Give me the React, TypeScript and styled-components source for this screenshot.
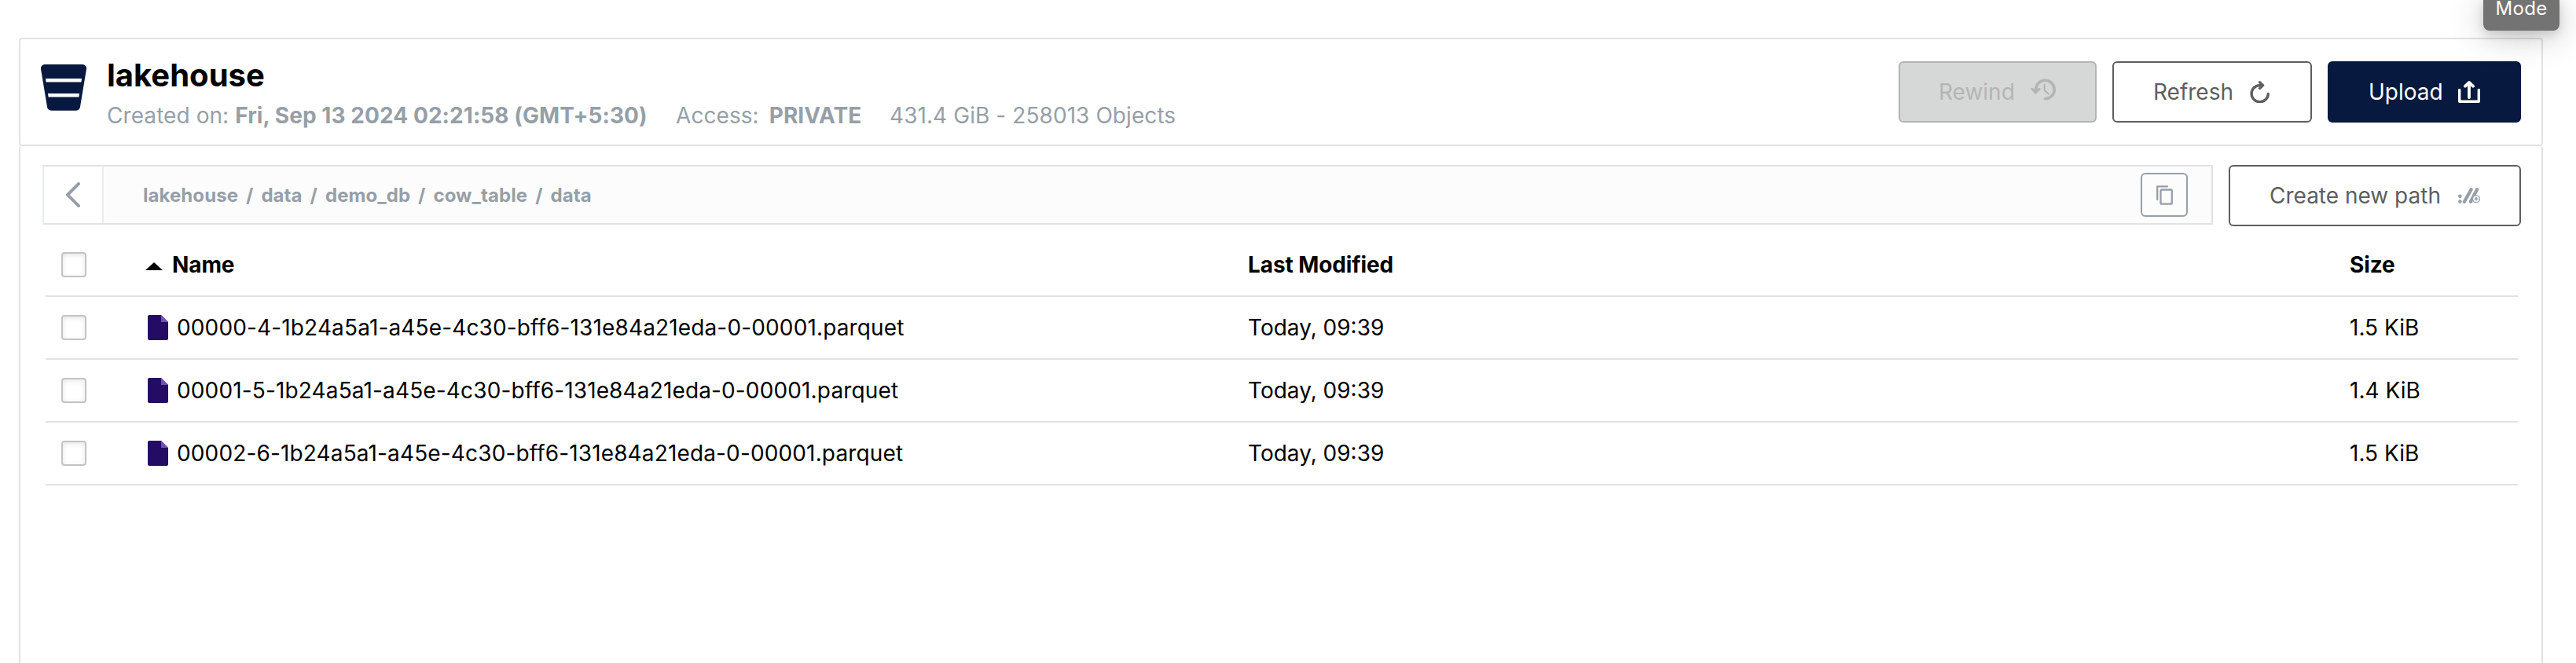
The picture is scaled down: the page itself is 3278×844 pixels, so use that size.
import styled, { createGlobalStyle, css } from "styled-components";

const GlobalStyle = createGlobalStyle`
  * {
    box-sizing: border-box;
  }

  body {
    margin: 0;
    background: #fff;
    color: #000;
    font-family: Inter, "Liberation Sans", sans-serif;
    font-size: 28px;
    font-optical-sizing: none;
    overflow: hidden;
  }

  svg {
    display: block;
    flex-shrink: 0;
  }
`;

const Page = styled.div`
  height: 844px;
  padding: 48px 42px 0 24px;
  display: flex;
  flex-direction: column;
  overflow: hidden;
`;

const Tooltip = styled.div`
  position: absolute;
  top: 0;
  left: 3160px;
  width: 97px;
  height: 39px;
  border-radius: 0 0 8px 8px;
  background: #737373;
  color: #fff;
  font-size: 24px;
  line-height: 22px;
  letter-spacing: 0.3px;
  text-align: center;
  box-shadow: 0 6px 40px rgba(0, 0, 0, 0.25), 0 4px 12px rgba(0, 0, 0, 0.12);
`;

const Header = styled.header`
  display: flex;
  align-items: flex-start;
  height: 138px;
  padding: 28px 26px 0;
  border: 2px solid #e2e2e2;
  border-radius: 4px;
`;

const BucketSlot = styled.div`
  padding-top: 4px;
  width: 84px;
`;

const Title = styled.h1`
  margin: -2px 0 0;
  height: 53px;
  font-size: 40px;
  font-weight: 700;
  line-height: 40px;
`;

const Meta = styled.div`
  display: flex;
  color: #969fa8;
  line-height: 36px;
  letter-spacing: 0.07px;
  white-space: nowrap;
`;

const MetaItem = styled.span<{ $width?: number }>`
  width: ${(p) => (p.$width ? `${p.$width}px` : "auto")};
`;

const Access = styled.b`
  margin-left: 5px;
`;

const Actions = styled.div`
  display: flex;
  gap: 20px;
  margin-left: auto;
`;

const Button = styled.button<{
  $width: number;
  $variant?: "primary" | "disabled";
}>`
  display: flex;
  align-items: center;
  justify-content: space-between;
  flex-shrink: 0;
  width: ${(p) => p.$width}px;
  height: 78px;
  padding: 0 50px;
  border: 2px solid #5e5e5e;
  border-radius: 6px;
  background: #fff;
  color: #5e5e5e;
  font: inherit;
  white-space: nowrap;

  ${(p) =>
    p.$variant === "primary" &&
    css`
      border-color: #07193e;
      background: #07193e;
      color: #fff;
    `}
  ${(p) =>
    p.$variant === "disabled" &&
    css`
      padding-left: 49px;
      border-color: #b4b4b4;
      background: #d6d8d7;
      color: #b4b4b4;

      svg {
        margin-bottom: 6px;
      }
    `}
`;

const Browser = styled.main`
  flex: 1;
  padding: 24px 26px 0 28px;
  border: 2px solid #e2e2e2;
  border-width: 0 2px;
  border-radius: 4px 4px 0 0;
`;

const PathRow = styled.div`
  display: flex;
  gap: 20px;
  height: 78px;
`;

const PathBar = styled.div`
  display: flex;
  align-items: center;
  flex: 1;
  height: 76px;
  padding-right: 30px;
  border: 2px solid #e2e2e2;
  border-left-color: #eaeded;
  background: #fcfcfd;
`;

const BackButton = styled.button`
  display: flex;
  align-items: center;
  justify-content: center;
  width: 76px;
  height: 100%;
  padding: 0;
  border: 0;
  border-right: 2px solid #eaeded;
  background: #fff;
  color: #969fa8;
`;

const Crumbs = styled.nav`
  flex: 1;
  display: flex;
  gap: 10px;
  padding-left: 50px;
  color: #969fa8;
  font-size: 24px;
  font-weight: 700;
  letter-spacing: 0.06px;
`;

const Crumb = styled.span`
  &:not(:first-child)::before {
    content: "/";
    margin-right: 10px;
  }
`;

const CopyButton = styled.button`
  display: flex;
  align-items: center;
  justify-content: center;
  width: 60px;
  height: 56px;
  padding: 0;
  border: 2px solid #969fa8;
  border-radius: 6px;
  background: transparent;
  color: #969fa8;
`;

const Table = styled.div`
  margin: 10px 4px 0;
`;

const Row = styled.div<{ $head?: boolean }>`
  display: grid;
  grid-template-columns: 127px 1403px 1402px 1fr;
  align-items: center;
  height: 80px;
  border-bottom: 2px solid #e2e2e2;
  font-weight: ${(p) => (p.$head ? 700 : 400)};
  letter-spacing: ${(p) => (p.$head ? "-0.1px" : "0")};
`;

const Checkbox = styled.span`
  width: 32px;
  height: 32px;
  margin-left: 20px;
  border: 2px solid #c3c3c3;
  border-radius: 4px;
  background: #fff;
  box-shadow: inset 0 2px 6px rgba(0, 0, 0, 0.1);
`;

const HeadCell = styled.div`
  display: flex;
  align-items: center;
  gap: 12px;

  svg {
    margin-top: 4px;
  }
`;

const NameCell = styled.div`
  display: flex;
  align-items: center;
  gap: 11px;
  padding-left: 3px;
  letter-spacing: 0.14px;
`;

const BucketIcon = () => (
  <svg width="58" height="59" viewBox="0 0 58 59">
    <path
      fill="#07193e"
      d="M5 0h48a5 5 0 0 1 5 5.700L50 54a5 5 0 0 1-5 4.700H13A5 5 0 0 1 8 54L0 5.700A5 5 0 0 1 5 0z"
    />
    <path fill="#fff" d="M6 18h46l-.6 4.500H6.600zM9 37h40l-.6 4.500H9.600z" />
  </svg>
);

const RewindIcon = () => (
  <svg width="32" height="28" viewBox="0 0 32 28" fill="none" stroke="currentColor">
    <path strokeWidth="3.600" d="M6.600 14A11.800 11.800 0 1 1 18.400 25.800" strokeLinecap="round" />
    <path fill="currentColor" strokeWidth="2.400" strokeLinejoin="round" d="M1.400 13.200l5 5.300 5.200-5.300-5 1.400z" />
    <path strokeWidth="2" d="M17.600 7.500v7.300l5 4.700" strokeLinecap="round" />
  </svg>
);

const RefreshIcon = () => (
  <svg width="28" height="28" viewBox="0 0 28 28" fill="none" stroke="currentColor">
    <path
      strokeWidth="3.400"
      strokeLinecap="round"
      d="M24.300 16.500A10.600 10.600 0 1 1 13.500 5.600h3"
    />
    <path strokeWidth="3.200" strokeLinejoin="round" strokeLinecap="round" d="M13.500 1.700l4.200 3.900-4.200 3.900" />
  </svg>
);

const UploadIcon = () => (
  <svg width="28" height="28" viewBox="0 0 28 28" fill="none" stroke="currentColor">
    <path strokeWidth="3.400" strokeLinecap="round" strokeLinejoin="round" d="M1.700 11.500v14.800h24.600V11.500" />
    <path strokeWidth="3.800" strokeLinecap="round" strokeLinejoin="round" d="M14 21V3M9 6.700l5-4.700 5 4.700" />
  </svg>
);

const NewPathIcon = () => (
  <svg width="28" height="20" viewBox="0 0 28 20" fill="none" stroke="#969fa8">
    <circle cx="2.400" cy="10.800" r="2.300" fill="#969fa8" stroke="none" />
    <circle cx="2.400" cy="17.500" r="2.300" fill="#969fa8" stroke="none" />
    <path strokeWidth="4.200" strokeLinecap="round" d="M7.900 17.800l8.700-15.600M15.900 17.800l8.200-15.600" />
    <circle cx="23" cy="14.200" r="4.500" fill="#fff" strokeWidth="1.300" />
    <path strokeWidth="1.500" d="M23 11.800v4.800M20.600 14.200h4.800" />
  </svg>
);

const BackIcon = () => (
  <svg width="18" height="32" viewBox="0 0 18 32" fill="none" stroke="currentColor">
    <path strokeWidth="3.900" strokeLinecap="round" strokeLinejoin="round" d="M16 2L2 16l14 14" />
  </svg>
);

const CopyIcon = () => (
  <svg width="21" height="25" viewBox="0 0 21 25" fill="none" stroke="currentColor">
    <path strokeWidth="2.300" strokeLinecap="round" strokeLinejoin="round" d="M1.200 18V1.300H14" />
    <rect x="5.500" y="5.500" width="14.300" height="18.200" rx="1.500" strokeWidth="2.300" />
  </svg>
);

const SortIcon = () => (
  <svg width="22" height="10" viewBox="0 0 22 10">
    <path d="M0 10L11 0l11 10z" />
  </svg>
);

const FileIcon = () => (
  <svg width="26" height="32" viewBox="0 0 26 32">
    <path fill="#240b63" d="M2 0h15l9 9v21a2 2 0 0 1-2 2H2a2 2 0 0 1-2-2V2a2 2 0 0 1 2-2z" />
    <path fill="#7350b8" d="M17 0l9 9h-9z" />
  </svg>
);

const crumbs = ["lakehouse", "data", "demo_db", "cow_table", "data"];

const files = [
  {
    name: "00000-4-1b24a5a1-a45e-4c30-bff6-131e84a21eda-0-00001.parquet",
    modified: "Today, 09:39",
    size: "1.5 KiB",
  },
  {
    name: "00001-5-1b24a5a1-a45e-4c30-bff6-131e84a21eda-0-00001.parquet",
    modified: "Today, 09:39",
    size: "1.4 KiB",
  },
  {
    name: "00002-6-1b24a5a1-a45e-4c30-bff6-131e84a21eda-0-00001.parquet",
    modified: "Today, 09:39",
    size: "1.5 KiB",
  },
];

const App = () => {
  return (
    <Page>
      <GlobalStyle />
      <Header>
        <BucketSlot>
          <BucketIcon />
        </BucketSlot>
        <div>
          <Title>lakehouse</Title>
          <Meta>
            <MetaItem $width={724}>
              Created on: <b>Fri, Sep 13 2024 02:21:58 (GMT+5:30)</b>
            </MetaItem>
            <MetaItem $width={272}>
              Access: <Access>PRIVATE</Access>
            </MetaItem>
            <MetaItem>431.4 GiB - 258013 Objects</MetaItem>
          </Meta>
        </div>
        <Actions>
          <Button $width={252} $variant="disabled" disabled>
            Rewind <RewindIcon />
          </Button>
          <Button $width={254}>
            Refresh <RefreshIcon />
          </Button>
          <Button $width={246} $variant="primary">
            Upload <UploadIcon />
          </Button>
        </Actions>
      </Header>
      <Browser>
        <PathRow>
          <PathBar>
            <BackButton>
              <BackIcon />
            </BackButton>
            <Crumbs>
              {crumbs.map((crumb, i) => (
                <Crumb key={i}>{crumb}</Crumb>
              ))}
            </Crumbs>
            <CopyButton>
              <CopyIcon />
            </CopyButton>
          </PathBar>
          <Button $width={372}>
            Create new path <NewPathIcon />
          </Button>
        </PathRow>
        <Table>
          <Row $head>
            <Checkbox />
            <HeadCell>
              <SortIcon /> Name
            </HeadCell>
            <span>Last Modified</span>
            <span>Size</span>
          </Row>
          {files.map((file) => (
            <Row key={file.name}>
              <Checkbox />
              <NameCell>
                <FileIcon /> {file.name}
              </NameCell>
              <span>{file.modified}</span>
              <span>{file.size}</span>
            </Row>
          ))}
        </Table>
      </Browser>
      <Tooltip>Mode</Tooltip>
    </Page>
  );
};

export default App;
